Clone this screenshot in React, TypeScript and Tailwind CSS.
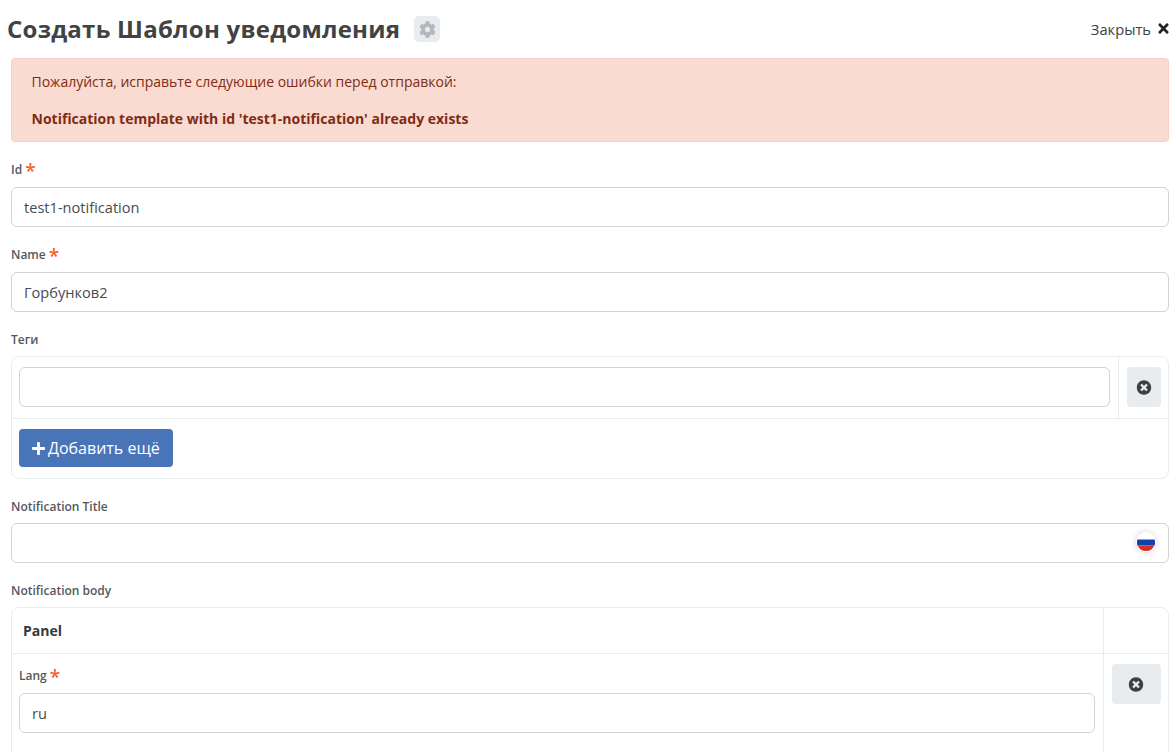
import { FaCog, FaPlus, FaTimes, FaTimesCircle } from 'react-icons/fa';

const inputClass =
  'block w-full h-10 px-3 bg-white border border-[#ced4da] rounded-[6px] text-[14.6px] font-medium text-[#474c52] outline-none';

function Label({ text, required }: { text: string; required?: boolean }) {
  return (
    <div className={`flex items-start mb-2 text-xs font-semibold text-[#53585e] leading-[18px] ${required ? 'h-[19px]' : 'h-[18px]'}`}>
      <span className={required ? 'mt-[1px]' : 'mt-[1px]'}>{text}</span>
      {required && <span className="ml-[3px] mt-[1px] text-[19px] leading-[20px] font-semibold text-[#f9622c]">*</span>}
    </div>
  );
}

function RemoveButton({ className }: { className: string }) {
  return (
    <button className={`flex items-center justify-center h-10 bg-[#e9ecef] rounded-[4px] text-[#3f3f3f] ${className}`}>
      <FaTimesCircle className="w-[15px] h-[15px] -translate-x-[0.5px]" />
    </button>
  );
}

function RuFlag() {
  return (
    <svg width="20" height="20" viewBox="0 0 20 20" className="block rounded-full shadow-[0_0_6px_rgba(0,0,0,0.18)]">
      <circle cx="10" cy="10" r="10" fill="#fff" />
      <path d="M1.35 7.5h17.3a9 9 0 0 1 .35 2.5 9 9 0 0 1-.3 3.5H1.3A9 9 0 0 1 1 10a9 9 0 0 1 .35-2.5z" fill="#1440ae" />
      <path d="M1.7 13.5h16.6a9 9 0 0 1-16.6 0z" fill="#d8301f" />
    </svg>
  );
}

export default function App() {
  return (
    <div className="h-[752px] overflow-hidden bg-white font-['Open_Sans',sans-serif] text-[#495057]">
      {/* Header */}
      <div className="flex items-center justify-between h-[58px] pl-[7px] pr-[5px]">
        <div className="flex items-center">
          <h1 className="text-2xl font-bold text-[#424242] tracking-[0.24px]">Создать Шаблон уведомления</h1>
          <span className="flex items-center justify-center w-[26px] h-[26px] ml-[14px] rounded-[5px] bg-[#e9ecef] text-[#b4b8bc]">
            <FaCog className="w-[17px] h-[17px]" />
          </span>
        </div>
        <div className="flex items-center text-[14.7px] text-[#3f3f3f]">
          Закрыть
          <FaTimes className="w-[15px] h-[15px] ml-[5px] text-[#212529]" />
        </div>
      </div>

      <div className="pl-[11px]">
        <div className="w-[1158px]">
          {/* Error alert */}
          <div className="h-[84px] mb-[18px] px-5 pt-[13px] bg-[#fadbd2] border border-[#f9cfc3] rounded-[4px] text-sm text-[#7f2c15]">
            <p className="leading-[20px] -ml-[0.5px]">Пожалуйста, исправьте следующие ошибки перед отправкой:</p>
            <p className="mt-[17px] leading-[20px] font-bold -ml-[0.5px]">Notification template with id 'test1-notification' already exists</p>
          </div>

          <div className="mb-[18px]">
            <Label text="Id" required />
            <input className={inputClass} defaultValue="test1-notification" />
          </div>

          <div className="mb-[18px]">
            <Label text="Name" required />
            <input className={inputClass} defaultValue="Горбунков2" />
          </div>

          {/* Tags */}
          <div className="mb-[18px]">
            <Label text="Теги" />
            <div className="border border-[#e9ecef] rounded-[8px] h-[123px]">
              <div className="flex h-[62px] border-b border-[#e9ecef]">
                <div className="flex-1 pl-[7px] pr-2 pt-[10px]">
                  <input className={inputClass} />
                </div>
                <div className="w-[50px] pl-2 pt-[10px] border-l border-[#e9ecef]">
                  <RemoveButton className="w-[34px]" />
                </div>
              </div>
              <div className="pl-[7px] pt-[10px]">
                <button className="flex items-center w-[154px] h-[38px] pl-3 rounded-[4px] bg-[#4a74b8] text-white text-base">
                  <FaPlus className="w-[15px] h-[15px] mr-[2px]" />
                  Добавить ещё
                </button>
              </div>
            </div>
          </div>

          <div className="mb-[18px]">
            <Label text="Notification Title" />
            <div className="relative">
              <input className={inputClass} />
              <span className="absolute right-[13px] top-[9px]">
                <RuFlag />
              </span>
            </div>
          </div>

          {/* Notification body */}
          <div>
            <Label text="Notification body" />
            <div className="border border-[#e9ecef] rounded-[8px] h-[300px]">
              <div className="flex h-[46px] border-b border-[#e9ecef]">
                <div className="flex-1 pl-[11px] flex items-center text-sm font-bold text-[#343a40]">Panel</div>
                <div className="w-[65px] border-l border-[#e9ecef]" />
              </div>
              <div className="flex h-[253px]">
                <div className="flex-1 pl-[7px] pr-2 pt-[12px]">
                  <Label text="Lang" required />
                  <input className={inputClass} defaultValue="ru" />
                </div>
                <div className="w-[65px] pl-2 pt-[10px] border-l border-[#e9ecef]">
                  <RemoveButton className="w-[49px]" />
                </div>
              </div>
            </div>
          </div>
        </div>
      </div>
    </div>
  );
}
